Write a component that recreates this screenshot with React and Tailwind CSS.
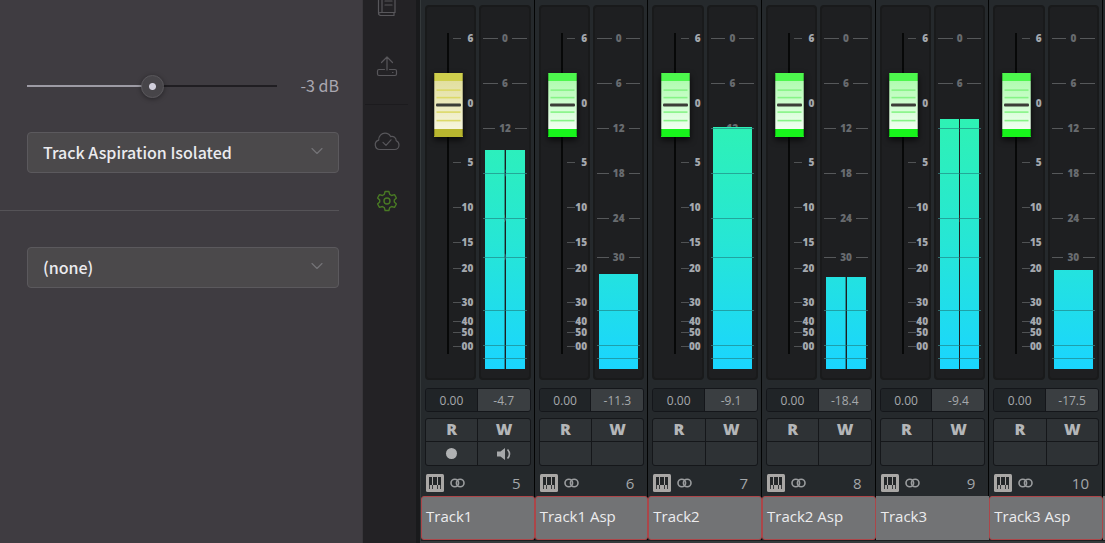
import { useState } from 'react'
import { ChevronDown } from 'lucide-react'

const presets = ['Track Aspiration Isolated', 'Track Voice Isolated', 'Full Mix']
const sidechains = ['(none)', 'Track1', 'Track2', 'Track3']

const faderMarks = [
  { label: '6', y: 33 },
  { label: '0', y: 98 },
  { label: '5', y: 157 },
  { label: '10', y: 202 },
  { label: '15', y: 237 },
  { label: '20', y: 263 },
  { label: '30', y: 297 },
  { label: '40', y: 316 },
  { label: '50', y: 327 },
  { label: '00', y: 341 },
]

const meterMarks = [
  { label: '0', y: 33 },
  { label: '6', y: 78 },
  { label: '12', y: 123 },
  { label: '18', y: 168 },
  { label: '24', y: 213 },
  { label: '30', y: 252 },
  { label: '', y: 305 },
  { label: '', y: 340 },
  { label: '', y: 353 },
]

const tracks = [
  { id: 5, name: 'Track1', peak: '-4.7', level: 219, stereo: true, cap: 'yellow', outlined: true, monitor: true },
  { id: 6, name: 'Track1 Asp', peak: '-11.3', level: 95, stereo: false, cap: 'green', outlined: true },
  { id: 7, name: 'Track2', peak: '-9.1', level: 242, stereo: false, cap: 'green', outlined: true },
  { id: 8, name: 'Track2 Asp', peak: '-18.4', level: 92, stereo: true, cap: 'green', outlined: true },
  { id: 9, name: 'Track3', peak: '-9.4', level: 250, stereo: true, cap: 'green', outlined: false },
  { id: 10, name: 'Track3 Asp', peak: '-17.5', level: 99, stereo: false, cap: 'green', outlined: true },
]

const capColors = {
  yellow: { top: '#cfcf4d', bottom: '#b8b62f', from: '#e2df9f', to: '#f6f5dc', line: '#dcd968' },
  green: { top: '#4df74d', bottom: '#18f41c', from: '#b0fcb0', to: '#f1fff1', line: '#86f486' },
}

function FaderCap({ color }) {
  const c = capColors[color]
  return (
    <svg viewBox="0 0 29 64" className="h-16 w-[29px] drop-shadow-[0_3px_3px_rgba(0,0,0,0.7)]" aria-hidden="true">
      <defs>
        <linearGradient id={`cap-${color}`} x1="0" y1="0" x2="0" y2="1">
          <stop offset="0" stopColor={c.from} />
          <stop offset="1" stopColor={c.to} />
        </linearGradient>
      </defs>
      <rect width="29" height="64" rx="1" fill={c.top} />
      <rect y="32" width="29" height="32" rx="1" fill={c.bottom} />
      <rect y="8" width="29" height="48" fill={`url(#cap-${color})`} />
      {[17, 24.5, 39, 47.5].map(y => (
        <rect key={y} x="2.5" y={y - 0.7} width="24" height="1.6" fill={c.line} />
      ))}
      <rect x="2" y="30.6" width="25" height="2.8" rx="1" fill="#3b3d37" />
      <path d="M.5 1v62M28.5 1v62" stroke="#000" strokeOpacity=".25" />
    </svg>
  )
}

function Fader({ track }) {
  const [pos, setPos] = useState(78)
  return (
    <div className="relative h-[375px] flex-1 rounded border-2 border-[#191a1b] bg-[#1e1f21]">
      <div className="absolute top-[26px] left-5 h-[321px] w-0.5 bg-[#070808]" />
      {faderMarks.map(m => (
        <div
          key={m.y}
          className="absolute right-px flex h-2.5 -translate-y-1/2 items-center"
          style={{ top: m.y - 2 }}
        >
          <span className="h-px w-2 bg-[#505254]" />
          <span className="w-3 text-right text-[10px] leading-[10px] font-extrabold text-[#a4a8ae]">{m.label}</span>
        </div>
      ))}
      <div className="absolute left-[7px] -translate-y-1/2" style={{ top: 26 + ((100 - pos) / 100) * 321 + 1 }}>
        <FaderCap color={track.cap} />
      </div>
      <input
        type="range"
        aria-label={`${track.name} volume`}
        value={pos}
        onChange={e => setPos(Number(e.target.value))}
        className="absolute top-[26px] left-[7px] h-[321px] w-[29px] cursor-pointer opacity-0 [direction:rtl] [writing-mode:vertical-lr]"
      />
    </div>
  )
}

function Meter({ track }) {
  const bar = 'flex-1 bg-[linear-gradient(#2ef2b4,#26e6d6_50%,#1ad5ff)] bg-bottom bg-no-repeat bg-[length:100%_250px]'
  return (
    <div className="relative h-[375px] flex-1 rounded border-2 border-[#191a1b] bg-[#1e1f21]">
      {meterMarks.map(m => (
        <div
          key={m.y}
          className="absolute inset-x-0.5 flex h-2.5 -translate-y-1/2 items-center"
          style={{ top: m.y - 2 }}
        >
          <span className="flex-1 border-t border-[#56585a]" />
          <span className="px-1 text-[10px] leading-[10px] font-extrabold text-[#686b6f]">{m.label}</span>
          <span className="flex-1 border-t border-[#56585a]" />
        </div>
      ))}
      <div className="absolute inset-x-1 bottom-[9px] flex gap-px" style={{ height: track.level }}>
        <div className={bar} />
        {track.stereo && <div className={bar} />}
      </div>
      {meterMarks
        .filter(m => m.y > 364 - track.level)
        .map(m => (
          <div key={m.y} className="absolute inset-x-0.5 h-px bg-[#207a7a]/60" style={{ top: m.y - 2 }} />
        ))}
    </div>
  )
}

function KeyboardIcon() {
  return (
    <svg viewBox="0 0 18 18" className="size-[18px]" aria-hidden="true">
      <rect width="18" height="18" rx="1.5" fill="#a9a7a5" />
      <path d="M3 3h3v8H3zM7 3h4v8H7zM12 3h3v8h-3z" fill="#232628" />
      <path d="M3 11h1v4H3zM6 11h1v4H6zM11 11h1v4h-1zM14 11h1v4h-1z" fill="#3a3c3e" />
    </svg>
  )
}

function LinkIcon() {
  return (
    <svg viewBox="0 0 15 10" className="h-2.5 w-[15px]" fill="none" stroke="#9a9c9e" strokeWidth="1.6" aria-hidden="true">
      <circle cx="4.8" cy="5" r="3.8" />
      <circle cx="10.2" cy="5" r="3.8" />
    </svg>
  )
}

function Strip({ track }) {
  return (
    <section className="min-w-0 border-r border-[#030404] bg-[#25292c] pt-[5px]">
      <div className="pr-[3px] pl-1">
        <div className="flex gap-[3px]">
          <Fader track={track} />
          <Meter track={track} />
        </div>

        <div className="mt-2 grid h-6 grid-cols-2 overflow-hidden rounded-[3px] border border-[#14161a] text-center text-xs leading-6 text-[#a6a9ac]">
          <span className="border-r border-[#14161a] bg-[#202427]">0.00</span>
          <span className="bg-[#3a3e41]">{track.peak}</span>
        </div>

        <div className="mt-1.5 grid h-12 grid-cols-2 grid-rows-[22px_23px] gap-px overflow-hidden rounded-[3px] border border-[#15171a] bg-[#15171a] text-base leading-5 font-extrabold text-[#b4b6b8]">
          <button className="bg-[#2e3235] pb-0.5">R</button>
          <button className="bg-[#2e3235] pb-0.5">W</button>
          <button className="flex items-center justify-center bg-[#2e3235]" aria-label="Record">
            {track.monitor && <span className="size-[11px] rounded-full bg-[#b0b2b3]" />}
          </button>
          <button className="flex items-center justify-center bg-[#2e3235]" aria-label="Monitor">
            {track.monitor && (
              <svg viewBox="0 0 14 12" className="h-3 w-3.5" aria-hidden="true">
                <path d="M0 3.500h3.500L8 0v12L3.500 8.500H0z" fill="#a6a8aa" />
                <path d="M10.500 1.500q4 4.500 0 9" fill="none" stroke="#a6a8aa" strokeWidth="1.600" />
              </svg>
            )}
          </button>
        </div>

        <div className="flex h-[30px] items-center pt-1 pr-2.5 pl-px">
          <KeyboardIcon />
          <span className="ml-1.5">
            <LinkIcon />
          </span>
          <span className="ml-auto text-[15px] leading-5 text-[#a3a6a9]">{track.id}</span>
        </div>
      </div>

      <div
        className={`-mr-px h-11 border bg-[#727375] px-1 pt-[7px] text-[15px] leading-6 whitespace-nowrap text-[#ececee] ${
          track.outlined ? 'rounded-[3px] border-[#ac4649]' : 'border-[#727375]'
        }`}
      >
        {track.name}
      </div>
    </section>
  )
}

function Select({ label, options }) {
  return (
    <div className="relative">
      <select
        aria-label={label}
        className="h-[41px] w-full appearance-none rounded border border-[#5b595d] bg-[#4b494b] px-[15px] pb-0.5 text-base font-medium text-[#ebebef]"
      >
        {options.map(o => (
          <option key={o}>{o}</option>
        ))}
      </select>
      <ChevronDown className="pointer-events-none absolute top-[9px] right-3 size-5 text-[#747377]" strokeWidth={1.4} />
    </div>
  )
}

function Settings() {
  const [gain, setGain] = useState(-3)
  const percent = 50 + (gain + 3) * 4
  return (
    <aside className="w-[362px] shrink-0 bg-[#3f3c41] pr-[23px] font-['Noto_Sans_CJK_SC','Noto_Sans',sans-serif]">
      <div className="flex items-center justify-between pt-[74px] pl-[27px]">
        <div className="flex h-6 w-[250px] items-center">
          <input
            type="range"
            min="-15"
            max="9"
            value={gain}
            aria-label="Gain"
            onChange={e => setGain(Number(e.target.value))}
            className="h-0.5 w-full appearance-none [&::-webkit-slider-thumb]:size-[23px] [&::-webkit-slider-thumb]:appearance-none [&::-webkit-slider-thumb]:rounded-full [&::-webkit-slider-thumb]:border [&::-webkit-slider-thumb]:border-[#59575b] [&::-webkit-slider-thumb]:bg-[radial-gradient(circle,#d0cedb_3px,#474549_4px)] [&::-webkit-slider-thumb]:shadow-[0_1px_5px_rgba(0,0,0,0.4)]"
            style={{ background: `linear-gradient(to right, #9d9ba4 ${percent}%, #201e22 ${percent}%)` }}
          />
        </div>
        <span className="pb-0.5 text-base leading-[22px] text-[#a9a7b0]">{gain} dB</span>
      </div>
      <div className="pt-[34px] pl-[27px]">
        <Select label="Preset" options={presets} />
      </div>
      <hr className="mt-[37px] mb-9 border-[#555357]" />
      <div className="pl-[27px]">
        <Select label="Sidechain" options={sidechains} />
      </div>
    </aside>
  )
}

function Rail() {
  const item = 'flex justify-center text-[#58575b]'
  const svg = { fill: 'none', stroke: 'currentColor', strokeWidth: 1.2, strokeLinecap: 'round', strokeLinejoin: 'round' }
  return (
    <nav className="flex w-[54px] shrink-0 flex-col border-l border-[#39373b] bg-[#232225] pr-1.5">
      <button className={item} aria-label="Library">
        <svg viewBox="0 0 20 16" className="h-4 w-5" {...svg}>
          <path d="M1.500 0v13q0 2.500 2.500 2.500h13M4 12.500h14V0M4 12.500q-2.500 0-2.500 1.500M5 0v12M8 1h7M8 5h7M17 12.500v3" />
        </svg>
      </button>
      <button className={`${item} mt-[39px]`} aria-label="Export">
        <svg viewBox="0 0 22 22" className="size-[22px]" {...svg}>
          <path d="M11 15V2M5.500 7.500L11 2l5.500 5.500M8.500 14.500H3q-1.500 0-1.500 1.500v3q0 1.500 1.500 1.500h16q1.500 0 1.500-1.500v-3q0-1.500-1.500-1.500h-5.500M16.500 17.500h.5" />
        </svg>
      </button>
      <hr className="mx-0.5 mt-[27px] border-[#1c1b1e]" />
      <button className={`${item} mt-[25px]`} aria-label="Cloud sync">
        <svg viewBox="0 0 26 22" className="h-[22px] w-[26px]" {...svg}>
          <path d="M6 19.500a4.800 4.800 0 0 1-1.300-9.400C4.500 6 7.500 3.200 11 3.200c2.600 0 4.600 1.400 5.600 3.400 3-.8 5.600 1.300 5.600 4.200 1.800.7 2.800 2.200 2.800 4.200 0 2.600-2 4.500-4.500 4.500zM9 12.300l3 3 5-5.500" />
        </svg>
      </button>
      <button className="mt-[38px] flex justify-center text-[#497a24]" aria-label="Settings">
        <svg viewBox="0 0 22 22" className="size-[22px]" {...svg} strokeWidth="1.4">
          <circle cx="11" cy="11" r="3" />
          <path d="M9.100 1.500h3.800l.8 2.900 1.900 1.100 2.900-.8 1.900 3.300-2.100 2.100v1.800l2.100 2.100-1.900 3.300-2.900-.8-1.900 1.100-.8 2.900H9.100l-.8-2.900-1.900-1.100-2.900.8-1.900-3.300 2.100-2.100v-1.800L1.600 8l1.900-3.300 2.900.8 1.900-1.100z" />
        </svg>
      </button>
    </nav>
  )
}

export default function App() {
  return (
    <div className="flex min-h-screen bg-[#25292c]">
      <Settings />
      <Rail />
      <main className="flex min-w-0 flex-1 border-l-4 border-[#191a1c] font-['Open_Sans','Noto_Sans',sans-serif]">
        <div className="flex min-w-0 flex-1 flex-col border-l border-[#34393b]">
          <div className="flex">
            <div className="grid min-w-0 flex-1 grid-cols-6">
              {tracks.map(t => (
                <Strip key={t.id} track={t} />
              ))}
            </div>
            <div className="flex w-0.5 flex-col justify-end bg-[#25292c]">
              <div className="h-11 bg-[#727375]" />
            </div>
          </div>
          <div className="flex-1 border-t border-[#1c1e20] bg-[#35393b]" />
        </div>
      </main>
    </div>
  )
}
